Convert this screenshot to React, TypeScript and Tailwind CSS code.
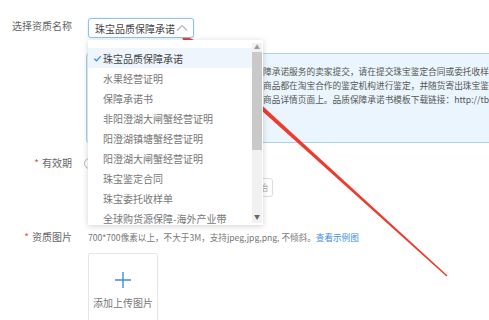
const options = [
  "珠宝品质保障承诺",
  "水果经营证明",
  "保障承诺书",
  "非阳澄湖大闸蟹经营证明",
  "阳澄湖镇塘蟹经营证明",
  "阳澄湖大闸蟹经营证明",
  "珠宝鉴定合同",
  "珠宝委托收样单",
  "全球购货源保障-海外产业带",
];

const infoLines = [
  "障承诺服务的卖家提交，请在提交珠宝鉴定合同或委托收样单",
  "商品都在淘宝合作的鉴定机构进行鉴定，并随货寄出珠宝鉴定证书",
  "商品详情页面上。品质保障承诺书模板下载链接：http://tb.cn/",
];

const Label = ({ text, required }: { text: string; required?: boolean }) => (
  <div className="w-[72px] shrink-0 text-right text-[10px] leading-[14px] text-[#666]">
    {required && <span className="mr-[3px] text-[#f04a3e]">*</span>}
    {text}
  </div>
);

const Dropdown = () => (
  <div className="absolute left-0 top-full mt-[2px] flex h-[185px] w-[175px] overflow-hidden bg-white shadow-[0_1px_6px_rgba(0,0,0,0.18)]">
    <ul className="flex-1 pt-[8px]">
      {options.map((o, i) => (
        <li
          key={o}
          className={
            i === 0
              ? "flex h-[20px] items-center bg-[#eef5fc] pl-[5px] text-[10px] text-[#444]"
              : "flex h-[20px] items-center pl-[15px] text-[10px] text-[#777] whitespace-nowrap"
          }
        >
          {i === 0 && (
            <svg width="9" height="9" viewBox="0 0 10 10" className="mr-[1px]">
              <path d="M1.5 5.2 L4 7.6 L8.6 2.4" fill="none" stroke="#3a8ee6" strokeWidth="1.5" />
            </svg>
          )}
          {o}
        </li>
      ))}
    </ul>
    <div className="mr-[1px] mt-[3px] mb-[2px] flex w-[10px] flex-col items-center bg-[#f1f1f1]">
      <div className="flex h-[8px] items-center text-[6px] leading-none text-[#999]">▲</div>
      <div className="mt-[1px] h-[98px] w-[10px] bg-[#c9c9c9]" />
      <div className="flex-1" />
      <div className="mb-[2px] flex h-[8px] items-center text-[6px] leading-none text-[#666]">▼</div>
    </div>
  </div>
);

const Arrow = () => (
  <svg className="pointer-events-none absolute left-0 top-0" width="489" height="320">
    <polygon points="180,34 190.1,52.6 199.5,42.2" fill="#ef3b2d" />
    <polygon points="190.2,46.6 193.6,42.8 447.5,275.5 446.5,276.5" fill="#ef3b2d" />
  </svg>
);

export default function App() {
  return (
    <div className="relative h-[320px] w-[489px] overflow-hidden bg-white font-['Noto_Sans_CJK_SC','Liberation_Sans',sans-serif]">
      <div className="flex items-start gap-[16px] pt-[18px]">
        <div className="pt-[1px]">
          <Label text="选择资质名称" />
        </div>
        <div className="relative z-10">
          <div className="flex h-[20px] w-[106px] items-center justify-between rounded-[3px] border border-[#8fc3ee] bg-white pl-[6px] pr-[5px] text-[10px] text-[#444] shadow-[0_0_2px_rgba(58,142,230,0.3)]">
            <span>珠宝品质保障承诺</span>
            <svg width="12" height="8" viewBox="0 0 12 8">
              <path d="M1 6.5 L6 1.5 L11 6.5" fill="none" stroke="#b5b5b5" strokeWidth="1.2" />
            </svg>
          </div>
          <Dropdown />
        </div>
      </div>

      <div className="ml-[86px] mt-[15px] h-[90px] w-[440px] overflow-hidden rounded-[3px] border border-[#a9d3f2] bg-[#eaf5fd] pl-[176px] pt-[11px]">
        {infoLines.map((l) => (
          <div key={l} className="whitespace-nowrap text-[8.7px] leading-[14px] text-[#555]">
            {l}
          </div>
        ))}
      </div>

      <div className="mt-[13px] flex items-center gap-[12px]">
        <Label text="有效期" required />
        <div className="h-[11px] w-[11px] rounded-full border border-[#bbb]" />
      </div>
      <div className="ml-[200px] mt-[8px] flex h-[19px] w-[73px] items-center justify-end rounded-[3px] border border-[#ddd] pr-[4px] text-[9px] text-[#aaa]">
        开始
      </div>

      <div className="mt-[33px] flex items-center gap-[16px]">
        <Label text="资质图片" required />
        <div className="whitespace-nowrap text-[8.6px] leading-[14px] text-[#777]">
          700*700像素以上，不大于3M，支持jpeg,jpg,png, 不倾斜。
          <span className="text-[#3d8ee0]">查看示例图</span>
        </div>
      </div>

      <div className="ml-[88px] mt-[9px] flex h-[72px] w-[70px] flex-col items-center rounded-[2px] border border-[#e6e6e6] pt-[17px]">
        <svg width="18" height="18" viewBox="0 0 18 18">
          <path d="M9 1 V17 M1 9 H17" stroke="#3d8ee0" strokeWidth="1.4" />
        </svg>
        <div className="mt-[6px] text-[10px] text-[#777]">添加上传图片</div>
      </div>

      <Arrow />
    </div>
  );
}
